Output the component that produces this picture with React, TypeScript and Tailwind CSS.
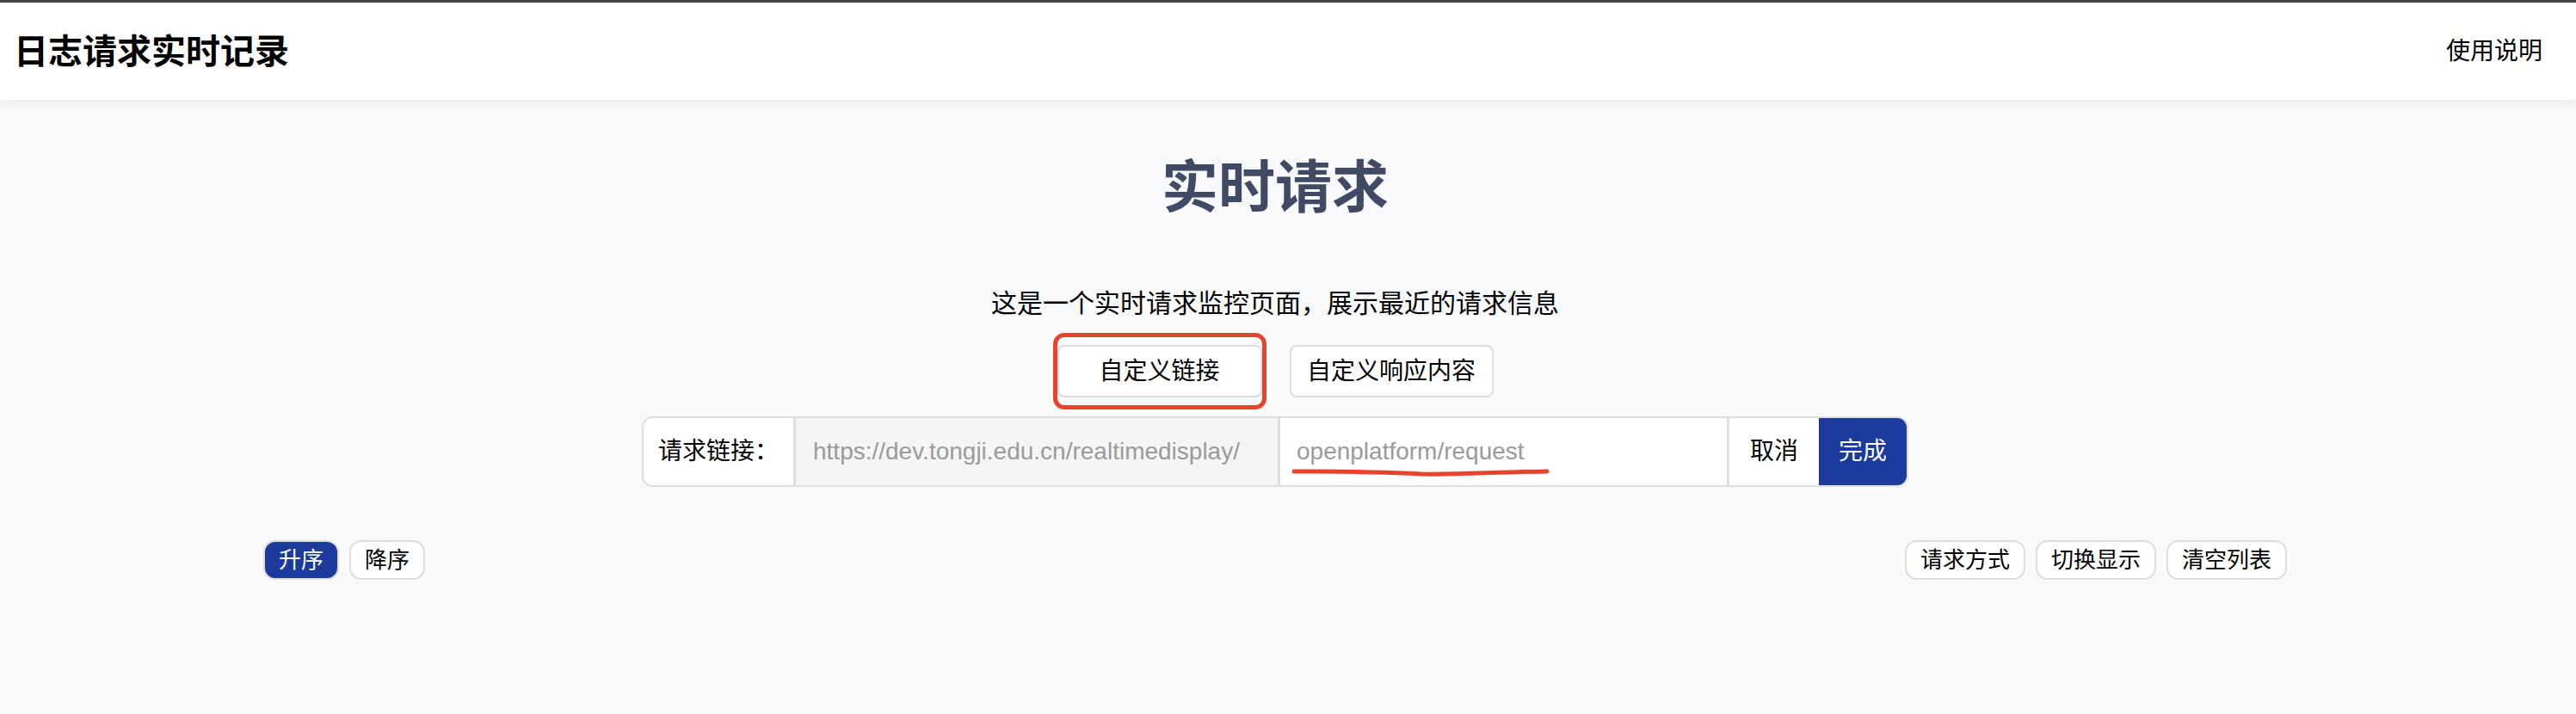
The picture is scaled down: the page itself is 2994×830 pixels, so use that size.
import React from "react";

const cjk = "font-['Liberation_Sans','Noto_Sans_CJK_SC',sans-serif]";

const RequestLinkBar = () => {
  return (
    <div className="flex h-[82px] w-[1472px] overflow-hidden rounded-[13px] border-2 border-[#dedede] text-[28px]">
      <div className="flex w-[174px] items-center justify-center bg-white text-black">请求链接：</div>
      <div className="flex w-[563px] items-center border-l-[3px] border-[#dedede] bg-[#f5f5f5] pl-[20px] text-[#9a9a9a]">
        https://dev.tongji.edu.cn/realtimedisplay/
      </div>
      <div className="relative flex w-[522px] items-center border-l-[3px] border-[#dedede] bg-white pl-[19px] text-[#9a9a9a]">
        openplatform/request
        {/* red underline annotation */}
        <svg className="absolute left-[14px] top-[56px]" width="300" height="12" viewBox="0 0 300 12">
          <path d="M2 6 C60 6 110 7 150 9 C190 10 230 7 296 6" stroke="#e8442c" strokeWidth="5" fill="none" strokeLinecap="round" />
        </svg>
      </div>
      <button className="flex w-[107px] items-center justify-center border-l-[3px] border-[#dedede] bg-white text-black">取消</button>
      <button className="flex flex-1 items-center justify-center bg-[#1b3a9c] text-white">完成</button>
    </div>
  );
};

const SmallButton = ({ label, active }: { label: string; active?: boolean }) => (
  <button
    className={
      active
        ? "h-[46px] rounded-[14px] border-2 border-[#dcdcdc] bg-[#1b3a9c] px-[16px] text-[26px] text-white"
        : "h-[46px] rounded-[14px] border-2 border-[#dcdcdc] bg-white px-[16px] text-[26px] text-black"
    }
  >
    {label}
  </button>
);

export default function App() {
  return (
    <div className={`min-h-screen bg-[#f8f9fb] ${cjk}`}>
      <header className="flex h-[116px] items-center justify-between border-t-[3px] border-[#444] bg-white pl-[16px] pr-[39px] shadow-[0_4px_14px_rgba(0,0,0,0.07)]">
        <h1 className="text-[40px] font-bold text-black">日志请求实时记录</h1>
        <a className="text-[28px] text-black">使用说明</a>
      </header>

      <main className="flex flex-col items-center pr-[30px]">
        <h2 className="mt-[62px] text-[66px] leading-[80px] font-bold text-[#414a65]">实时请求</h2>
        <p className="mt-[75px] text-[30px] leading-[40px] text-black">这是一个实时请求监控页面，展示最近的请求信息</p>

        <div className="mt-[28px] flex gap-[32px]">
          <div className="relative">
            <button className="h-[61px] w-[238px] rounded-[8px] border-2 border-[#dcdcdc] bg-white text-[28px] text-black">
              自定义链接
            </button>
            {/* red highlight annotation */}
            <div className="absolute -inset-x-[5px] -inset-y-[14px] rounded-[13px] border-[5px] border-[#e8442c]" />
          </div>
          <button className="h-[61px] w-[237px] rounded-[8px] border-2 border-[#dcdcdc] bg-white text-[28px] text-black">
            自定义响应内容
          </button>
        </div>

        <div className="mt-[22px]">
          <RequestLinkBar />
        </div>

        <div className="mt-[62px] flex w-[2352px] justify-between">
          <div className="flex gap-[12px]">
            <SmallButton label="升序" active />
            <SmallButton label="降序" />
          </div>
          <div className="flex gap-[12px]">
            <SmallButton label="请求方式" />
            <SmallButton label="切换显示" />
            <SmallButton label="清空列表" />
          </div>
        </div>
      </main>
    </div>
  );
}
